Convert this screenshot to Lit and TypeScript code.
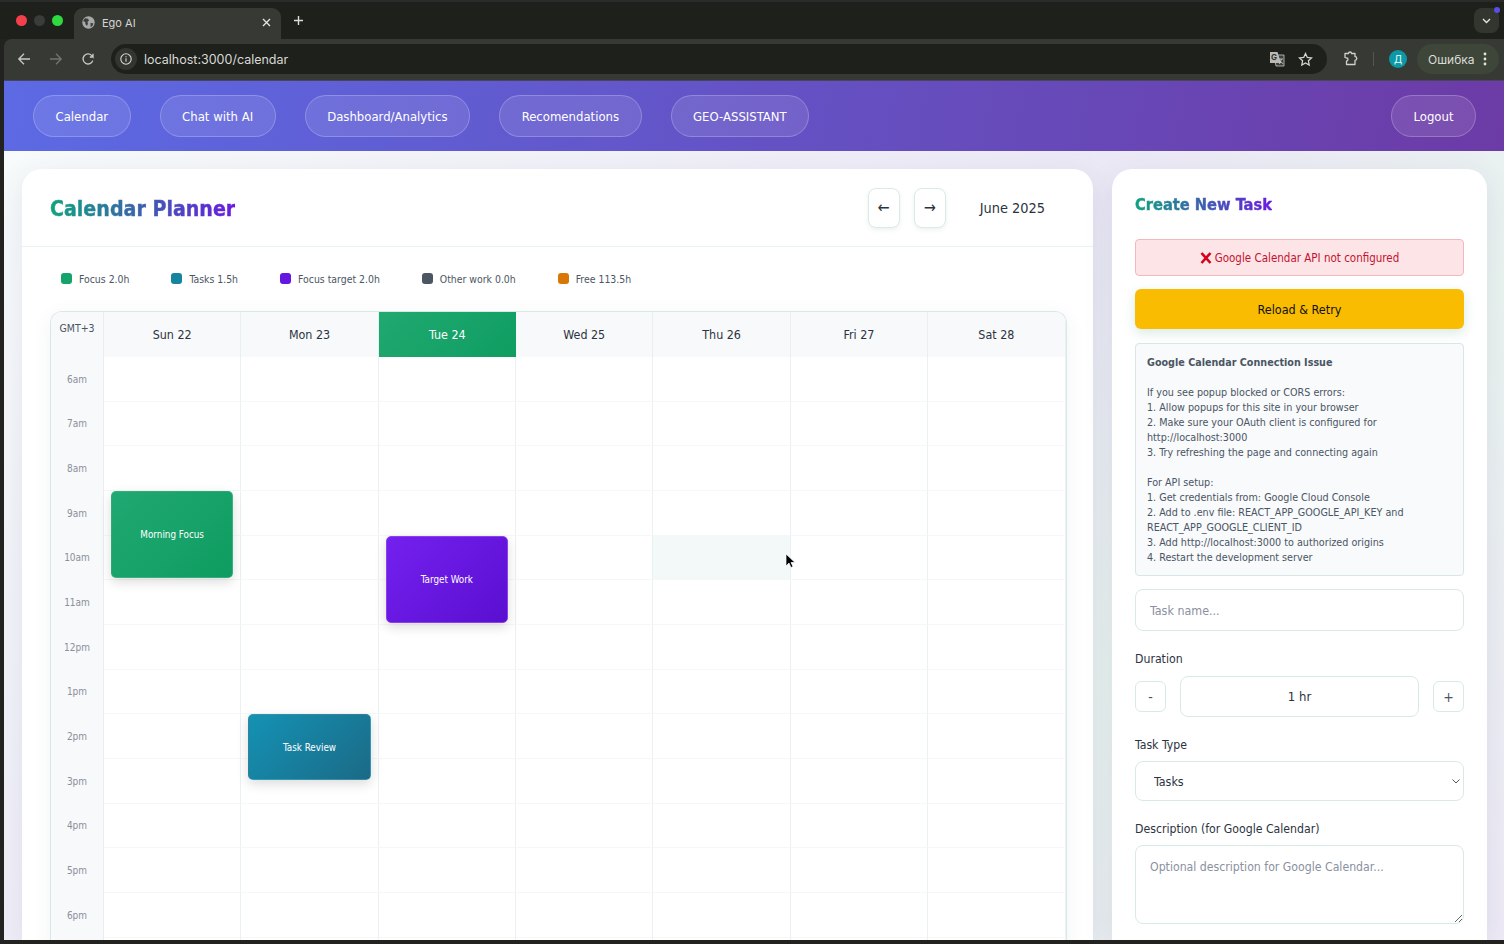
import { LitElement, html, css, nothing } from 'lit';
import { customElement, state } from 'lit/decorators.js';

const NAV = ['Calendar', 'Chat with AI', 'Dashboard/Analytics', 'Recomendations', 'GEO-ASSISTANT'];
const DAYS = ['Sun 22', 'Mon 23', 'Tue 24', 'Wed 25', 'Thu 26', 'Fri 27', 'Sat 28'];
// the last row is only a sliver at the bottom of the window, so it has no label
const HOURS = ['6am', '7am', '8am', '9am', '10am', '11am', '12pm', '1pm', '2pm', '3pm', '4pm', '5pm', '6pm', ''];
const LEGEND = [
  { label: 'Focus 2.0h', cls: 'focus' },
  { label: 'Tasks 1.5h', cls: 'tasks' },
  { label: 'Focus target 2.0h', cls: 'target' },
  { label: 'Other work 0.0h', cls: 'other' },
  { label: 'Free 113.5h', cls: 'free' },
];
const EVENTS = [
  { day: 0, hour: 3, span: 2, title: 'Morning Focus', cls: 'focus' },
  { day: 2, hour: 4, span: 2, title: 'Target Work', cls: 'target' },
  { day: 1, hour: 8, span: 1.52, title: 'Task Review', cls: 'tasks' },
];
const ROW = 44.67;

@customElement('app-root')
export class AppRoot extends LitElement {
  @state() duration = 1;

  renderChrome() {
    return html`
      <div class="tabstrip">
        <div class="lights"><i class="red"></i><i class="grey"></i><i class="green"></i></div>
        <div class="tab">
          <svg width="13" height="13" viewBox="0 0 13 13"><circle cx="6.5" cy="6.5" r="6.2" fill="#a6a9a8"/><path d="M3 2.2l3 .6 1 1.6-1.6 1.5.6 1.6-1 2.4-1.6-2-.2-1.8L1 5zM8.5 7l2.8.2-.8 2.6-1.8 1.4z" fill="#3b3e3a"/></svg>
          <span>Ego AI</span>
          <svg class="close" width="9" height="9" viewBox="0 0 9 9"><path d="M1 1l7 7M8 1L1 8" stroke="#e6e6e3" stroke-width="1.3"/></svg>
        </div>
        <svg class="plus" width="11" height="11" viewBox="0 0 11 11"><path d="M5.5 1v9M1 5.5h9" stroke="#dcdcd9" stroke-width="1.4"/></svg>
        <div class="tabsearch">
          <svg width="9" height="6" viewBox="0 0 9 6"><path d="M1 1l3.5 3.5L8 1" fill="none" stroke="#e4e4e1" stroke-width="1.4"/></svg>
          <i></i>
        </div>
      </div>
      <div class="toolbar">
        <svg class="tool" width="14" height="14" viewBox="0 0 14 14"><path d="M13 7H2M7 1.8L1.8 7 7 12.2" fill="none" stroke="#c9cac6" stroke-width="1.3"/></svg>
        <svg class="tool" width="14" height="14" viewBox="0 0 14 14"><path d="M1 7h11M7 1.8L12.2 7 7 12.2" fill="none" stroke="#73756f" stroke-width="1.3"/></svg>
        <svg class="tool" width="14" height="14" viewBox="0 0 14 14"><path d="M11.8 8.6A5 5 0 1 1 10.6 3.4L12 5V1.8M12 5H8.8" fill="none" stroke="#c9cac6" stroke-width="1.3"/></svg>
        <div class="omnibox">
          <span class="info">
            <svg width="12" height="12" viewBox="0 0 12 12"><circle cx="6" cy="6" r="5.2" fill="none" stroke="#d8d8d5" stroke-width="1.1"/><path d="M6 5.3v3.4M6 3.2v1.1" stroke="#d8d8d5" stroke-width="1.1"/></svg>
          </span>
          <span class="url">localhost:3000/calendar</span>
          <span class="translate">
            <svg width="16" height="16" viewBox="0 0 16 16"><path d="M5 4h10v11H7z" fill="#3c3f3a" stroke="#b9bab6" stroke-width=".9"/><path d="M1 1h7.500l3.500 11H1z" fill="#b9bab6"/><path d="M10.500 8h3.500M12.200 8c0 2-1 4-2 5M11 9.500c.5 1.500 1.500 2.500 3 3" fill="none" stroke="#d5d5d2" stroke-width=".8"/></svg>
            <b>G</b>
          </span>
          <svg class="star" width="15" height="15" viewBox="0 0 15 15"><path d="M7.500 1.500l1.800 3.900 4.200.5-3.100 2.900.8 4.200-3.700-2.100-3.700 2.100.8-4.200L1.500 5.900l4.200-.5z" fill="none" stroke="#d4d4d1" stroke-width="1.300"/></svg>
        </div>
        <svg class="puzzle" width="16" height="16" viewBox="0 0 16 16"><path d="M2 2.500h3.500a1.500 1.500 0 0 1 3 0H12v3.200a1.500 1.500 0 0 1 0 3.600V13.500H3.500V10a1.500 1.500 0 0 0 0-3L2 6.500z" fill="none" stroke="#d0d0cd" stroke-width="1.300" stroke-linejoin="round"/></svg>
        <span class="divider"></span>
        <span class="avatar">Д</span>
        <span class="errorpill">Ошибка
          <svg width="4" height="14" viewBox="0 0 4 14"><circle cx="2" cy="2" r="1.400" fill="#e3e3e0"/><circle cx="2" cy="7" r="1.400" fill="#e3e3e0"/><circle cx="2" cy="12" r="1.400" fill="#e3e3e0"/></svg>
        </span>
      </div>
    `;
  }

  renderCalendar() {
    return html`
      <div class="calendar">
        <div class="corner">GMT+3</div>
        ${DAYS.map((d, i) => html`<div class="dayhead ${i === 2 ? 'today' : ''}">${d}</div>`)}
        ${HOURS.map(
          (h, r) => html`
            <div class="hour">${h}</div>
            ${DAYS.map((_, c) => {
              const ev = EVENTS.find((e) => e.day === c && e.hour === r);
              return html`<div class="cell ${c === 4 && r === 4 ? 'hover' : ''}">
                ${ev
                  ? html`<div class="event ${ev.cls}" style="height:${ev.span * ROW - 2}px">${ev.title}</div>`
                  : nothing}
              </div>`;
            })}
          `
        )}
      </div>
    `;
  }

  render() {
    return html`
      ${this.renderChrome()}
      <div class="app">
        <nav>
          ${NAV.map((n) => html`<button class="pill">${n}</button>`)}
          <button class="pill logout">Logout</button>
        </nav>
        <main>
          <section class="card planner">
            <header>
              <h1>Calendar Planner</h1>
              <div class="controls">
                <button class="arrow">←</button>
                <button class="arrow">→</button>
                <span class="month">June 2025</span>
              </div>
            </header>
            <div class="body">
              <div class="legend">
                ${LEGEND.map((l) => html`<span class="item"><i class="dot ${l.cls}"></i>${l.label}</span>`)}
              </div>
              ${this.renderCalendar()}
            </div>
          </section>
          <aside class="card side">
            <h2>Create New Task</h2>
            <div class="alert">
              <svg width="12" height="12" viewBox="0 0 12 12"><path d="M1.500 1l9 10M10.500 1l-9 10" stroke="#d5001c" stroke-width="2.600"/></svg>
              Google Calendar API not configured
            </div>
            <button class="retry">Reload &amp; Retry</button>
            <div class="help"><b>Google Calendar Connection Issue</b>

If you see popup blocked or CORS errors:
1. Allow popups for this site in your browser
2. Make sure your OAuth client is configured for
http://localhost:3000
3. Try refreshing the page and connecting again

For API setup:
1. Get credentials from: Google Cloud Console
2. Add to .env file: REACT_APP_GOOGLE_API_KEY and
REACT_APP_GOOGLE_CLIENT_ID
3. Add http://localhost:3000 to authorized origins
4. Restart the development server</div>
            <input class="field name" placeholder="Task name..." />
            <label>Duration</label>
            <div class="stepper">
              <button>-</button>
              <div class="value">${this.duration} hr</div>
              <button>+</button>
            </div>
            <label class="type">Task Type</label>
            <div class="selectwrap">
              <select class="field"><option>Tasks</option></select>
              <svg width="8" height="5" viewBox="0 0 8 5"><path d="M.5.5L4 4 7.500.5" fill="none" stroke="#4b5563"/></svg>
            </div>
            <label class="desc">Description (for Google Calendar)</label>
            <textarea class="field" placeholder="Optional description for Google Calendar..."></textarea>
          </aside>
        </main>
      </div>
      <svg class="cursor" width="11" height="16" viewBox="0 0 11 16"><path d="M1 1v12l3-3 2 4.500 2-1-2-4h4z" fill="#000" stroke="#fff" stroke-width=".7"/></svg>
    `;
  }

  static styles = css`
    :host {
      display: flex;
      flex-direction: column;
      position: relative;
      width: 1504px;
      height: 944px;
      overflow: hidden;
      box-sizing: border-box;
      padding-bottom: 4px;
      background: #222320;
      font-family: 'DejaVu Sans Condensed', 'DejaVu Sans', sans-serif;
      font-stretch: condensed;
      color: #2c3340;
    }
    * {
      box-sizing: border-box;
    }
    button,
    input,
    select,
    textarea {
      font-family: inherit;
      font-stretch: inherit;
    }

    /* browser window */
    .tabstrip {
      display: flex;
      align-items: flex-end;
      height: 39px;
      flex: none;
      background: #1d201b;
      border-top: 2px solid #2b2b2b;
      font-family: 'Inter', sans-serif;
      font-stretch: normal;
    }
    .lights {
      display: flex;
      gap: 7px;
      width: 74px;
      padding-left: 16px;
      align-self: flex-start;
      margin-top: 13px;
    }
    .lights i {
      width: 11px;
      height: 11px;
      border-radius: 50%;
    }
    .lights .red {
      background: #f4404a;
    }
    .lights .grey {
      background: #393c38;
    }
    .lights .green {
      background: #2fd93f;
    }
    .tab {
      display: flex;
      align-items: center;
      width: 207px;
      height: 31px;
      padding: 0 10px 2px 8px;
      gap: 7px;
      background: #373a34;
      border-radius: 9px 9px 0 0;
      color: #d6d6d3;
      font-size: 11px;
    }
    .tab .close {
      margin-left: auto;
    }
    .plus {
      margin: 0 0 13px 12px;
    }
    .tabsearch {
      position: relative;
      display: flex;
      align-items: center;
      justify-content: center;
      width: 25px;
      height: 25px;
      margin: 0 5px 6px auto;
      border-radius: 8px;
      background: #33362f;
    }
    .tabsearch i {
      position: absolute;
      top: -1px;
      right: -1px;
      width: 6px;
      height: 6px;
      border-radius: 50%;
      background: #5b4ee8;
    }
    .toolbar {
      display: flex;
      align-items: center;
      flex: none;
      height: 42px;
      margin-left: 4px;
      padding: 0 5px 1px 13px;
      background: #373a34;
      border-radius: 8px 0 0 0;
      border-bottom: 1px solid #4a4460;
      font-family: 'Inter', sans-serif;
      font-stretch: normal;
    }
    .tool {
      flex: none;
      margin-right: 18px;
    }
    .tool:nth-of-type(3) {
      margin-right: 16px;
    }
    .omnibox {
      display: flex;
      align-items: center;
      flex: none;
      width: 1216px;
      height: 30px;
      padding: 0 14px 0 4px;
      border-radius: 15px;
      background: #1d201b;
    }
    .info {
      display: flex;
      align-items: center;
      justify-content: center;
      width: 22px;
      height: 22px;
      border-radius: 50%;
      background: #33362f;
    }
    .url {
      margin-left: 7px;
      font-size: 12.500px;
      color: #d9d9d6;
    }
    .translate {
      position: relative;
      display: flex;
      margin-left: auto;
    }
    .translate b {
      position: absolute;
      left: 2px;
      top: 1px;
      font-size: 8px;
      color: #2c2e2a;
    }
    .star {
      margin-left: 13px;
    }
    .puzzle {
      margin-left: 16px;
    }
    .divider {
      width: 1px;
      height: 14px;
      margin-left: 14px;
      background: #55574f;
    }
    .avatar {
      display: flex;
      align-items: center;
      justify-content: center;
      width: 18px;
      height: 18px;
      margin-left: 15px;
      border-radius: 50%;
      background: #0d98a6;
      color: #eafcff;
      font-size: 10px;
    }
    .errorpill {
      display: flex;
      align-items: center;
      gap: 8px;
      height: 30px;
      margin-left: 10px;
      padding: 0 12px 0 11px;
      border-radius: 15px;
      background: #3d4639;
      color: #dcdcd8;
      font-size: 12px;
    }

    /* page */
    .app {
      display: flex;
      flex-direction: column;
      flex: 1;
      min-height: 0;
      margin-left: 4px;
      overflow: hidden;
      background: linear-gradient(135deg, #f8fcfb 0%, #ece9f6 50%, #e9f3ef 72%, #eeeaf6 100%);
    }
    nav {
      display: flex;
      align-items: center;
      flex: none;
      gap: 29px;
      height: 70px;
      padding: 0 28px 0 29px;
      background: linear-gradient(100deg, #5c6ae4 0%, #6c3ba6 100%);
    }
    .pill {
      height: 42px;
      padding: 0 21.500px;
      border-radius: 21px;
      border: 1px solid rgba(255, 255, 255, 0.22);
      background: rgba(255, 255, 255, 0.1);
      color: #fff;
      font-size: 13px;
    }
    .logout {
      margin-left: auto;
    }
    main {
      display: grid;
      grid-template-columns: 1071px 375px;
      gap: 19px;
      flex: 1;
      min-height: 0;
      padding: 18px 0 0 18px;
    }
    .card {
      background: #fff;
      border-radius: 20px 20px 0 0;
      box-shadow: 0 8px 30px rgba(60, 60, 120, 0.1);
      overflow: hidden;
    }
    .planner header {
      display: flex;
      align-items: center;
      justify-content: space-between;
      height: 78px;
      padding: 0 48px 0 28px;
      border-bottom: 1px solid #e8f4ef;
    }
    h1,
    h2 {
      margin: 0;
      width: fit-content;
      background: linear-gradient(90deg, #10a37f, #6a1be0);
      -webkit-background-clip: text;
      background-clip: text;
      color: transparent;
      font-weight: 700;
      -webkit-text-stroke: 0.4px transparent;
    }
    h1 {
      padding-top: 2px;
      font-size: 21.200px;
    }
    h2 {
      margin-top: 25px;
      font-size: 16.300px;
      line-height: 22px;
    }
    .controls {
      display: flex;
      align-items: center;
      gap: 14px;
    }
    .arrow {
      width: 32px;
      height: 40px;
      padding: 0;
      border-radius: 8px;
      border: 1px solid #d8ece7;
      background: #fff;
      color: #2c3340;
      font-size: 16px;
      box-shadow: 0 2px 5px rgba(20, 60, 60, 0.07);
    }
    .month {
      margin-left: 20px;
      font-size: 14.400px;
    }
    .body {
      padding: 0 26.500px 0 28px;
    }
    .legend {
      display: flex;
      align-items: center;
      gap: 42px;
      height: 65px;
      padding: 0 0 2px 11px;
      font-size: 10.400px;
      color: #4b5563;
    }
    .item {
      display: flex;
      align-items: center;
      gap: 7px;
    }
    .dot {
      width: 11px;
      height: 11px;
      border-radius: 3px;
    }
    .dot.focus {
      background: #14a36b;
    }
    .dot.tasks {
      background: #14849f;
    }
    .dot.target {
      background: #6417e0;
    }
    .dot.other {
      background: #4b5563;
    }
    .dot.free {
      background: #d97706;
    }
    .calendar {
      display: grid;
      grid-template-columns: 53px repeat(7, 1fr);
      grid-template-rows: 45px;
      grid-auto-rows: ${ROW}px;
      margin-top: -1px;
      border: 1px solid #dbe9e6;
      border-bottom: none;
      border-radius: 12px 12px 0 0;
      box-shadow: 0 4px 20px rgba(30, 70, 70, 0.06);
      overflow: hidden;
    }
    .corner {
      padding-top: 10px;
      background: #f7f9fa;
      border-right: 1px solid #e6eeef;
      color: #4b5563;
      font-size: 10.500px;
      text-align: center;
    }
    .dayhead {
      display: flex;
      align-items: center;
      justify-content: center;
      background: #f7f9fb;
      border-right: 1px solid #e9f0f2;
      font-size: 12.400px;
    }
    .dayhead.today {
      background: linear-gradient(135deg, #20a970, #0f9d62);
      color: #fff;
      border-right: none;
    }
    .hour {
      display: flex;
      align-items: center;
      justify-content: center;
      background: #f8f9fa;
      border-right: 1px solid #e6eeef;
      color: #8a8f9a;
      font-size: 10px;
    }
    .cell {
      position: relative;
      border-right: 1px solid #eaf1f3;
      border-bottom: 1px solid #f6f8f8;
    }
    .cell.hover {
      background: #f2f9f8;
    }
    .event {
      position: absolute;
      z-index: 1;
      top: 0;
      left: 7px;
      right: 7px;
      display: flex;
      align-items: center;
      justify-content: center;
      border: 1px solid rgba(255, 255, 255, 0.12);
      border-radius: 5px;
      color: #fff;
      font-size: 9.800px;
      box-shadow: 0 4px 12px rgba(0, 0, 0, 0.14);
    }
    .event.focus {
      background: linear-gradient(135deg, #20a972, #0e9c60);
    }
    .event.target {
      background: linear-gradient(135deg, #7420ef, #5a0fd0);
      border-color: #8a3ff0;
    }
    .event.tasks {
      background: linear-gradient(135deg, #1492b4, #1b6a86);
    }
    .side {
      display: flex;
      flex-direction: column;
      padding: 0 23px;
    }
    .alert {
      display: flex;
      align-items: center;
      justify-content: center;
      gap: 3px;
      flex: none;
      height: 37px;
      margin-top: 23px;
      border: 1px solid #f5b6bd;
      border-radius: 4px;
      background: #fde4e7;
      color: #c4122f;
      font-size: 11.500px;
    }
    .retry {
      flex: none;
      height: 40px;
      margin-top: 13px;
      border: none;
      border-radius: 6px;
      background: #f9bc00;
      color: #111;
      font-size: 12.500px;
      box-shadow: 0 4px 12px rgba(40, 140, 110, 0.18);
    }
    .help {
      flex: none;
      height: 233px;
      margin-top: 14px;
      padding: 11px 11px 0;
      border: 1px solid #d5e8e4;
      border-radius: 4px;
      background: #f8fafc;
      color: #4b5563;
      font-size: 10.700px;
      line-height: 15px;
      white-space: pre-line;
    }
    .field {
      flex: none;
      width: 100%;
      border: 1px solid #d6ebe6;
      border-radius: 8px;
      background: #fff;
      color: #2c3340;
      font-size: 12.400px;
      outline: none;
    }
    .field::placeholder {
      color: #8a90a0;
    }
    .name {
      height: 42px;
      margin-top: 13px;
      padding: 0 14px;
    }
    label {
      margin-top: 20px;
      font-size: 12.200px;
      line-height: 17px;
    }
    .stepper {
      display: grid;
      grid-template-columns: 31px 1fr 31px;
      align-items: center;
      gap: 14px;
      margin-top: 8px;
    }
    .stepper button {
      height: 31px;
      padding: 0;
      border: 1px solid #d6ebe6;
      border-radius: 6px;
      background: #fff;
      color: #4b5563;
      font-size: 14px;
    }
    .value {
      display: flex;
      align-items: center;
      justify-content: center;
      height: 41px;
      border: 1px solid #d6ebe6;
      border-radius: 8px;
      font-size: 13px;
    }
    label.type {
      margin-top: 20px;
    }
    .selectwrap {
      position: relative;
      flex: none;
      margin-top: 7px;
    }
    .selectwrap svg {
      position: absolute;
      right: 4px;
      top: 18px;
    }
    select.field {
      display: block;
      height: 40px;
      padding: 0 18px;
      appearance: none;
    }
    label.desc {
      margin-top: 20px;
    }
    textarea.field {
      height: 79px;
      margin-top: 7px;
      padding: 13px 14px;
      font-size: 12.200px;
      line-height: 16px;
    }
    .cursor {
      position: absolute;
      left: 785px;
      top: 553px;
      z-index: 5;
    }
  `;
}
